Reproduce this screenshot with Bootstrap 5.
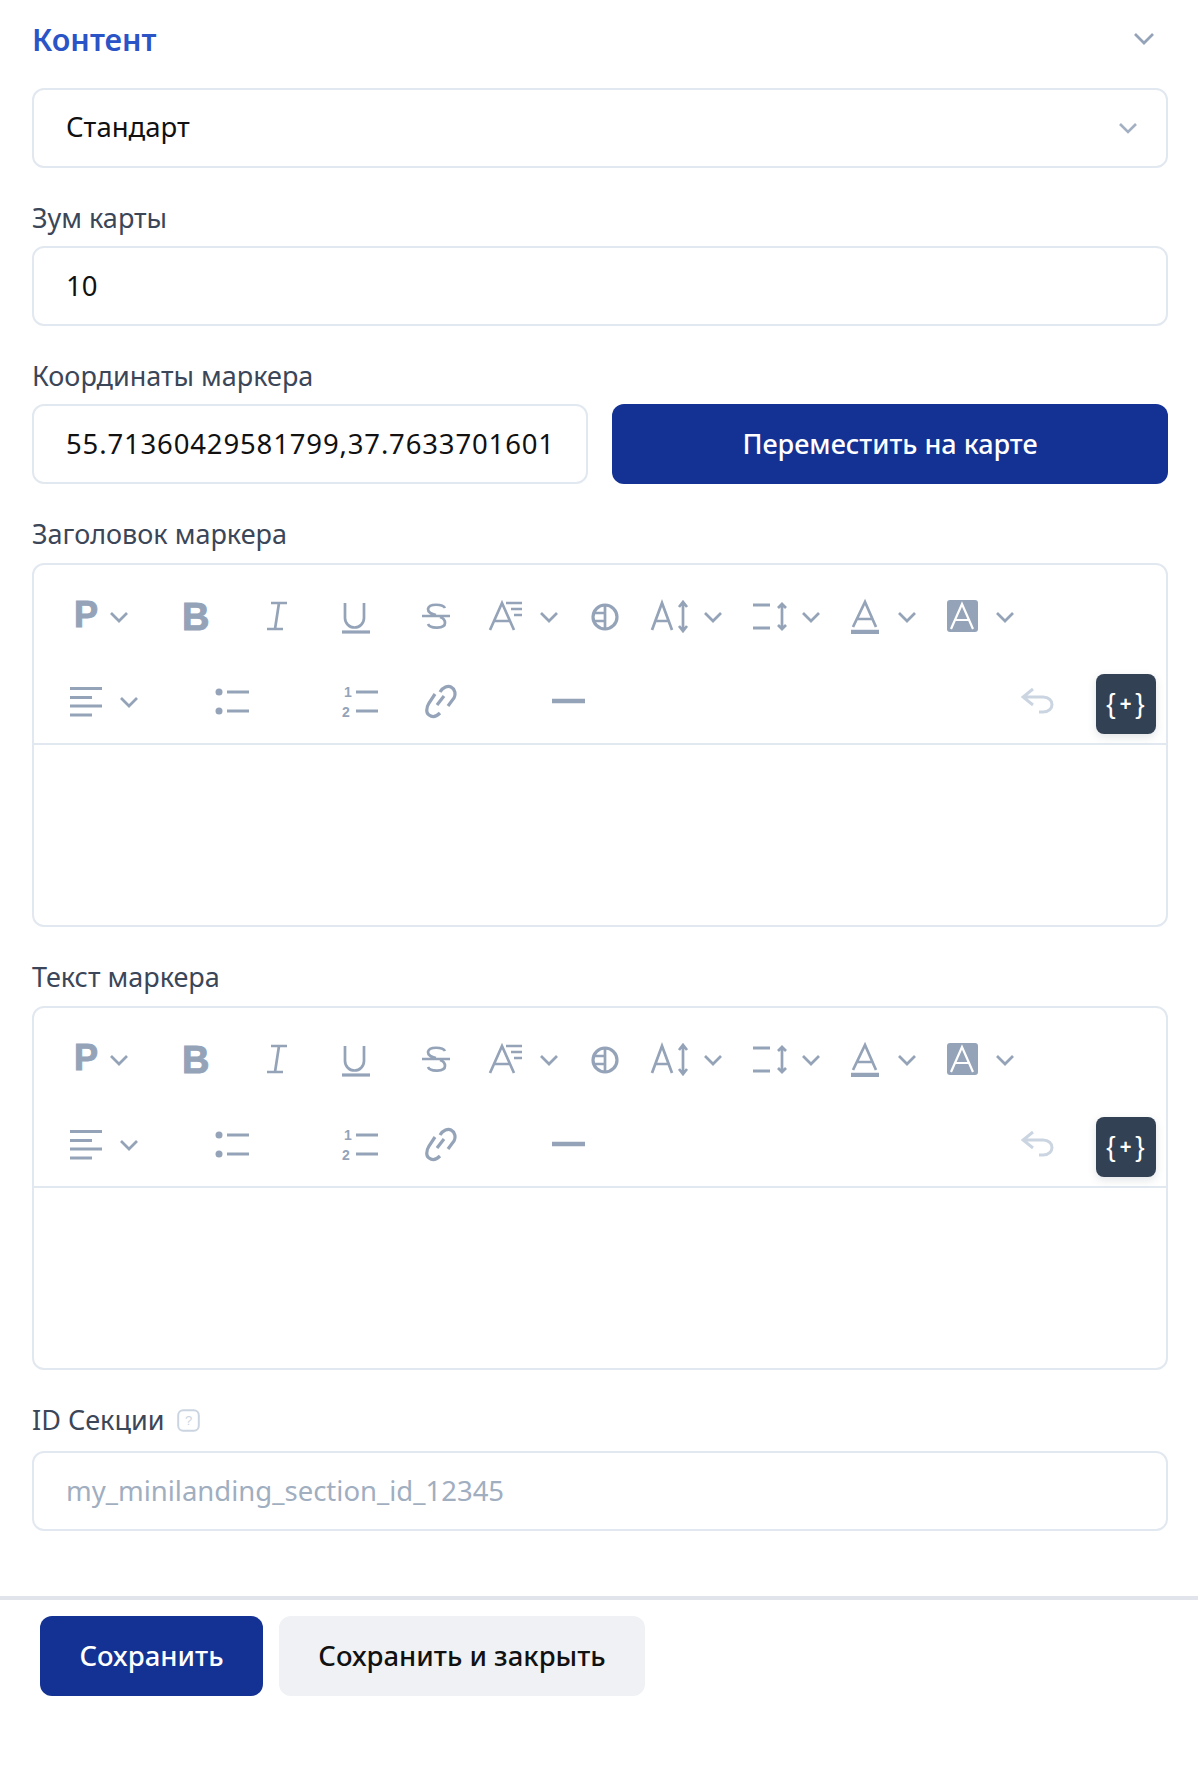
<!DOCTYPE html>
<html lang="ru">
<head>
    <meta charset="UTF-8">
    <title>Контент</title>
    <link rel="stylesheet" href="https://cdn.jsdelivr.net/npm/bootstrap@5.3.0/dist/css/bootstrap.min.css">
    <style>
        body { background: #fff; font-family: "Noto Sans", "Open Sans", sans-serif; color: #111; }
        .page-body { padding: 0 30px 0 32px; height: 1596px; }
        .section-head { height: 88px; padding-bottom: 10px; }
        .section-title { color: #2b54c6; font-size: 30.5px; font-weight: 600; margin: 0; }
        .head-chevron { margin-right: 14px; }
        .field { margin-bottom: 33px; }
        .field-label { display: block; color: #3b4658; font-size: 27px; line-height: 34px; margin-bottom: 11px; }
        .field-label-wide { margin-bottom: 12px; }
        .form-control, .form-select {
            height: 80px; border: 2px solid #e2e8f0; border-radius: 12px; padding: 0 32px 2px;
            font-size: 27.5px; color: #111; box-shadow: none;
        }
        .form-control::placeholder { color: #a0aec0; }
        .form-select {
            background-image: url("data:image/svg+xml,%3csvg xmlns='http://www.w3.org/2000/svg' viewBox='0 0 18 11'%3e%3cpath fill='none' stroke='%23a3afc2' stroke-width='2.6' d='M1 1l8 8 8-8'/%3e%3c/svg%3e");
            background-size: 18px 11px; background-position: right 29px center;
        }
        .coord-input { letter-spacing: .85px; }
        .btn-main, .btn-soft { height: 80px; border: 0; border-radius: 12px; font-size: 27.5px; font-weight: 500; }
        .btn-main, .btn-main:hover { background: #133293; color: #fff; }
        .btn-soft, .btn-soft:hover { background: #f0f1f5; color: #111; }
        .coord-col { flex: 0 0 556px; }
        .move-btn { flex: 0 0 556px; font-size: 27px; }
        .rich-box { height: 364px; border: 2px solid #e2e8f0; border-radius: 12px; }
        .rich-tools { height: 180px; padding: 33px 10px 0 36px; border-bottom: 2px solid #e2e8f0; }
        .tool-row { height: 36px; margin-bottom: 40px; }
        .tool-row svg { display: block; flex: none; }
        .tool-row .tall-ic { margin: -6px 0; }
        .tool-row2 { height: 60px; }
        .tool-row2 svg { margin-top: 10px; }
        .undo-ic { margin-right: 41px; }
        .var-btn { width: 60px; height: 60px; background: #334155; border-radius: 8px; color: #fff; font: 400 28px "Liberation Sans", sans-serif; letter-spacing: 1px; box-shadow: 0 3px 8px rgba(51, 65, 85, .15); }
        .var-plus { font-size: 20px; font-weight: 700; margin: 0 3px; }
        .ic { fill: none; stroke: #94a3b8; stroke-width: 2.7; }
        .ic-3 { stroke-width: 3.2; }
        .ic-4 { stroke-width: 4.5; }
        .ic-text { fill: #94a3b8; font-family: "Liberation Sans", sans-serif; }
        .ic-heavy { stroke: #94a3b8; stroke-width: 1; }
        .id-label { margin-bottom: 14px; }
        .help-ic { margin-left: 13px; }
        .page-foot { border-top: 4px solid #e2e4ec; padding: 16px 0 0 40px; }
        .save-btn { width: 223px; }
        .close-btn { width: 366px; }
    </style>
</head>
<body>

<div class="page-body">
    <div class="section-head d-flex justify-content-between align-items-center">
        <h5 class="section-title">Контент</h5>
        <svg class="head-chevron" width="20" height="12" viewBox="0 0 20 12"><path class="ic" d="M1 1l9 9 9-9"/></svg>
    </div>

    <div class="field">
        <select class="form-select"><option>Стандарт</option></select>
    </div>

    <div class="field">
        <label class="field-label">Зум карты</label>
        <input type="text" class="form-control" value="10">
    </div>

    <div class="field">
        <label class="field-label">Координаты маркера</label>
        <div class="d-flex justify-content-between">
            <div class="coord-col"><input type="text" class="form-control coord-input" value="55.71360429581799,37.7633701601"></div>
            <button type="button" class="btn btn-main move-btn">Переместить на карте</button>
        </div>
    </div>

    <div class="field">
        <label class="field-label field-label-wide">Заголовок маркера</label>
        <div class="rich-box">
            <div class="rich-tools" id="tools1">
                <div class="tool-row d-flex">
                    <svg class="tall-ic" width="110" height="48" viewBox="0 -6 110 48"><text class="ic-text ic-heavy" x="4" y="29" font-size="36" font-weight="700">P</text><path class="ic" d="M41 15l8 8 8-8"/></svg>
                    <svg class="tall-ic" width="80" height="48" viewBox="0 -6 80 48"><text class="ic-text ic-heavy" x="2" y="32" font-size="38" font-weight="700">B</text></svg>
                    <svg width="76" height="36" viewBox="0 0 76 36"><path class="ic" d="M11 5h16M7 31h16M19 5l-4 26"/></svg>
                    <svg width="80" height="36" viewBox="0 0 80 36"><path class="ic" d="M9 5v15a9.500 9.500 0 0 0 19 0V5"/><path class="ic ic-3" d="M6 34h28"/></svg>
                    <svg width="68" height="36" viewBox="0 0 68 36"><path class="ic" d="M6 18h28M29 10c-2-4-16-5-17 1 0 3 3 5 8 6M12 26c2 5 17 5 17-1 0-3-2-5-5-6"/></svg>
                    <svg width="102" height="36" viewBox="0 0 102 36"><path class="ic" d="M6 32L18 5l12 27M10 23h16M22 5h16M27 11h11M30 17h8"/><path class="ic" d="M57 15l8 8 8-8"/></svg>
                    <svg width="60" height="36" viewBox="0 0 60 36"><circle class="ic ic-3" cx="19" cy="19" r="12"/><path class="ic" d="M19 7v24M7 15h12M7 23h12"/></svg>
                    <svg width="102" height="36" viewBox="0 0 102 36"><path class="ic" d="M6 32L16 5l10 27M9 23h14M37 5v28M33 9l4-5 4 5M33 28l4 5 4-5"/><path class="ic" d="M59 15l8 8 8-8"/></svg>
                    <svg width="98" height="36" viewBox="0 0 98 36"><path class="ic ic-3" d="M5 7h17M5 30h17"/><path class="ic" d="M34 7v23M30 10l4-4 4 4M30 27l4 4 4-4"/><path class="ic" d="M55 15l8 8 8-8"/></svg>
                    <svg width="96" height="36" viewBox="0 0 96 36"><path class="ic" d="M7 29L19 4l11 25M11 21h15"/><path class="ic ic-4" d="M5 34h28"/><path class="ic" d="M53 15l8 8 8-8"/></svg>
                    <svg width="78" height="36" viewBox="0 0 78 36"><rect x="5" y="2" width="31" height="32" rx="3" fill="#94a3b8"/><path fill="none" stroke="#fff" stroke-width="2.200" d="M9 31L20 6l11 25M13 22h15"/><path class="ic" d="M55 15l8 8 8-8"/></svg>
                </div>
                <div class="tool-row2 d-flex justify-content-between">
                    <div class="d-flex">
                        <svg width="140" height="36" viewBox="0 0 140 36"><path class="ic ic-3" d="M0 4.500h32M0 13.500h22M0 22h32M0 31h22"/><path class="ic" d="M51 14l8 8 8-8"/></svg>
                        <svg width="126" height="36" viewBox="0 0 126 36"><circle cx="9" cy="8" r="3.500" fill="#94a3b8"/><circle cx="9" cy="27" r="3.500" fill="#94a3b8"/><path class="ic ic-3" d="M17 8h22M17 27h22"/></svg>
                        <svg width="84" height="36" viewBox="0 0 84 36"><text class="ic-text" x="8" y="13" font-size="14" font-weight="700">1</text><text class="ic-text" x="6" y="33" font-size="14" font-weight="700">2</text><path class="ic ic-3" d="M20 8h22M20 27h22"/></svg>
                        <svg width="126" height="36" viewBox="0 0 126 36"><path class="ic ic-3" d="M20 8C23 3 28 1.500 31 3 35 5 36 10 34 14L28 22M15 10L9 19C6 24 6 29 9 31 13 34 17 32 20 29M17 21L24 12"/></svg>
                        <svg width="44" height="36" viewBox="0 0 44 36"><path class="ic ic-4" d="M6 17h33"/></svg>
                    </div>
                    <div class="d-flex">
                        <svg class="undo-ic" width="34" height="36" viewBox="0 2 34 36"><path fill="none" stroke="#cbd5e1" stroke-width="3" d="M12 7L2 15l10 8M2 15h20c12 0 12 15 0 15h-4"/></svg>
                        <div class="var-btn d-flex align-items-center justify-content-center">{<span class="var-plus">+</span>}</div>
                    </div>
                </div>
            </div>
        </div>
    </div>

    <div class="field">
        <label class="field-label field-label-wide">Текст маркера</label>
        <div class="rich-box">
            <div class="rich-tools" id="tools2"></div>
        </div>
    </div>

    <div class="field">
        <label class="field-label id-label d-flex align-items-center">ID Секции
            <svg class="help-ic" width="23" height="23" viewBox="0 0 23 23"><rect x="1.200" y="1.200" width="20.600" height="20.600" rx="5" fill="none" stroke="#cbd5e1" stroke-width="2"/><text x="11.500" y="16" font-size="13" text-anchor="middle" fill="#cbd5e1" font-family="Liberation Sans, sans-serif">?</text></svg>
        </label>
        <input type="text" class="form-control" placeholder="my_minilanding_section_id_12345">
    </div>
</div>

<div class="page-foot d-flex gap-3">
    <button type="button" class="btn btn-main save-btn">Сохранить</button>
    <button type="button" class="btn btn-soft close-btn">Сохранить и закрыть</button>
</div>

<script src="https://cdn.jsdelivr.net/npm/bootstrap@5.3.0/dist/js/bootstrap.bundle.min.js"></script>
<script>
// второй редактор использует ту же панель
document.getElementById("tools2").innerHTML = document.getElementById("tools1").innerHTML;
</script>

</body>
</html>
